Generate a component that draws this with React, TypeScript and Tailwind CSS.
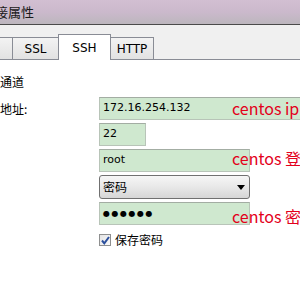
// SSH tab of a connection-properties dialog, with red annotations over the fields.

const LATIN = "font-['DejaVu_Sans','Noto_Sans_CJK_SC',sans-serif]";
const CJK = "font-['Noto_Sans_CJK_SC','DejaVu_Sans',sans-serif]";

export default function App() {
  return (
    <div className={`relative h-[293px] w-[300px] overflow-hidden bg-white text-[#000] ${LATIN}`}>
      {/* -- Title bar ---------------------------------------------------- */}
      <div className="flex h-[25px] items-center border-b border-[#4a4a4a] bg-gradient-to-b from-[#d2bfd2] via-[#cbb9cc] to-[#bcb6bd]">
        <span className={`-ml-[5px] text-[13px] leading-[16px] text-[#1a1a1a] ${CJK}`}>接属性</span>
      </div>

      {/* -- Tab strip ---------------------------------------------------- */}
      <div className="flex h-[35px] items-end border-b border-[#898c95] bg-[#f0f0f0] text-[12px]">
        <Tab width="w-[13px]" first />
        <Tab width="w-[47px]" label="SSL" />
        <Tab width="w-[53px]" label="SSH" active />
        <Tab width="w-[44px]" label="HTTP" />
      </div>

      {/* -- Panel -------------------------------------------------------- */}
      <div className="pt-[14px]">
        <div className={`h-[16px] text-[12px] leading-[16px] ${CJK}`}>通道</div>

        <div className="mt-[7px] grid grid-cols-[99px_1fr]">
          <div className={`flex h-[23px] items-center text-[12px] ${CJK}`}>地址:</div>
          <Field className="w-[220px] text-[11px]">172.16.254.132</Field>

          <div />
          <Field className="mt-[3px] w-[47px] text-[11px]">22</Field>

          <div />
          <Field className="mt-[3px] w-[151px] text-[11px]">root</Field>

          <div />
          <div className="mt-[3px] flex h-[24px] w-[151px] items-center justify-between rounded-[3px] border border-[#707070] bg-gradient-to-b from-[#f6f6f6] via-[#e8e8e8] to-[#d6d6d6] pl-[3px] pr-[4px]">
            <span className={`text-[12px] ${CJK}`}>密码</span>
            <svg width="8" height="5" viewBox="0 0 8 5">
              <path d="M0 0h8L4 5z" fill="#000" />
            </svg>
          </div>

          <div />
          <Field className="mt-[3px] w-[151px] text-[8px] tracking-[1.5px]">●●●●●●</Field>

          <div />
          <div className="mt-[8px] flex items-center gap-[4px]">
            <div className="flex h-[12px] w-[12px] items-center justify-center border border-[#8e8f8f] bg-gradient-to-br from-[#e4e4e4] to-[#fafafa]">
              <svg width="9" height="9" viewBox="0 0 9 9">
                <path d="M1 4.5l2.3 2.8L8 1" stroke="#2b4f9c" strokeWidth="2" fill="none" />
              </svg>
            </div>
            <span className={`text-[12px] leading-[14px] ${CJK}`}>保存密码</span>
          </div>
        </div>
      </div>

      {/* -- Annotations, drawn over the fields --------------------------- */}
      <Note top="top-[98px]">centos ip</Note>
      <Note top="top-[148px]">centos 登录</Note>
      <Note top="top-[206px]">centos 密码</Note>
    </div>
  );
}

function Tab({
  width,
  label,
  active,
  first,
}: {
  width: string;
  label?: string;
  active?: boolean;
  first?: boolean;
}) {
  const edge = first ? "border-t border-r" : "-ml-px border-t border-x";
  if (active) {
    return (
      <div
        className={`relative z-10 -mb-px flex h-[26px] ${width} ${edge} items-start justify-center border-[#898c95] bg-white pt-[4px]`}
      >
        {label}
      </div>
    );
  }
  return (
    <div
      className={`flex h-[22px] ${width} ${edge} items-center justify-center border-[#898c95] bg-gradient-to-b from-[#f3f3f3] to-[#e2e2e2]`}
    >
      {label}
    </div>
  );
}

function Field({ className, children }: { className: string; children: React.ReactNode }) {
  return (
    <div
      className={`flex h-[23px] shrink-0 items-center border border-[#b8c4b8] border-t-[#a3ada3] bg-[#cfe8cf] pl-[3px] ${className}`}
    >
      {children}
    </div>
  );
}

function Note({ top, children }: { top: string; children: React.ReactNode }) {
  return (
    <div
      className={`absolute left-[232px] ${top} whitespace-nowrap text-[16px] leading-[20px] text-[#e3001b] ${CJK}`}
    >
      {children}
    </div>
  );
}
